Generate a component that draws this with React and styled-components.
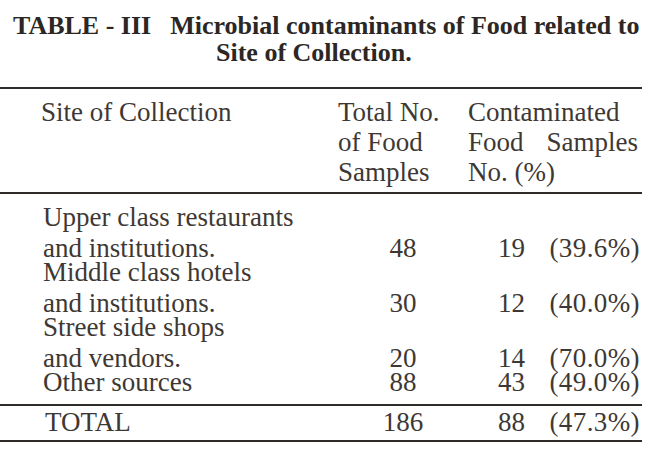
import React from "react";
import styled, { createGlobalStyle } from "styled-components";

const Global = createGlobalStyle`
  html, body { margin: 0; padding: 0; background: #ffffff; }
  body { font-family: "Liberation Serif", "Times New Roman", serif; color: #3e3834; }
`;

const Page = styled.div`
  width: 650px;
  height: 451px;
  overflow: hidden;
  background: #ffffff;
`;

const Caption = styled.div`
  padding-top: 12px;
  margin-bottom: 21px;
  font-family: "Liberation Serif", serif;
  font-weight: bold;
  font-size: 26px;
  line-height: 27px;
  color: #2c2724;
  white-space: nowrap;
`;

const CaptionLine = styled.div`
  padding-left: ${(p) => p.$left}px;
`;

const Label = styled.span`
  margin-right: 19px;
`;

const Table = styled.div`
  width: 642px;
  font-size: 27px;
  color: #3e3834;
`;

const Rule = styled.div`
  height: 2px;
  background: #302c29;
`;

const Section = styled.div`
  padding-top: ${(p) => p.$top}px;
  padding-bottom: ${(p) => p.$bottom}px;
`;

const Row = styled.div`
  display: grid;
  grid-template-columns: 338px 130px 174px;
  align-items: ${(p) => p.$align || "end"};
  line-height: ${(p) => p.$lh}px;
  white-space: nowrap;
`;

const LabelCell = styled.div`
  display: flex;
  flex-direction: column;
  gap: ${(p) => p.$gap || 0}px;
  padding-left: ${(p) => p.$indent}px;
`;

const CenterCell = styled.div`
  text-align: center;
`;

const LeftCell = styled.div`
  text-align: left;
`;

const JustifiedLine = styled.div`
  display: flex;
  justify-content: space-between;
  padding-right: 4px;
`;

const ContamCell = styled.div`
  display: grid;
  grid-template-columns: 57px 1fr;
`;

const Count = styled.span`
  text-align: right;
`;

const Percent = styled.span`
  text-align: right;
  padding-right: 2px;
  letter-spacing: 0.4px;
`;

const rows = [
  { lines: ["Upper class restaurants", "and institutions."], total: 48, count: 19, pct: "(39.6%)" },
  { lines: ["Middle class hotels", "and institutions."], total: 30, count: 12, pct: "(40.0%)" },
  { lines: ["Street side shops", "and vendors."], total: 20, count: 14, pct: "(70.0%)" },
  { lines: ["Other sources"], total: 88, count: 43, pct: "(49.0%)" },
];

export default function App() {
  return (
    <Page>
      <Global />
      <Caption>
        <CaptionLine $left={13}>
          <Label>TABLE - III</Label>Microbial contaminants of Food related to
        </CaptionLine>
        <CaptionLine $left={216}>Site of Collection.</CaptionLine>
      </Caption>
      <Table>
        <Rule />
        <Section $top={8} $bottom={5}>
          <Row $lh={30} $align="start">
            <LabelCell $indent={41}>
              <span>Site of Collection</span>
            </LabelCell>
            <LeftCell>
              <div>Total No.</div>
              <div>of Food</div>
              <div>Samples</div>
            </LeftCell>
            <LeftCell>
              <div>Contaminated</div>
              <JustifiedLine>
                <span>Food</span>
                <span>Samples</span>
              </JustifiedLine>
              <div>No. (%)</div>
            </LeftCell>
          </Row>
        </Section>
        <Rule />
        <Section $top={11} $bottom={10}>
          {rows.map((r) => (
            <Row key={r.lines[0]} $lh={24}>
              <LabelCell $indent={43} $gap={7}>
                {r.lines.map((l) => (
                  <span key={l}>{l}</span>
                ))}
              </LabelCell>
              <CenterCell>{r.total}</CenterCell>
              <ContamCell>
                <Count>{r.count}</Count>
                <Percent>{r.pct}</Percent>
              </ContamCell>
            </Row>
          ))}
        </Section>
        <Rule />
        <Section $top={4} $bottom={6}>
          <Row $lh={24}>
            <LabelCell $indent={45}>
              <span>TOTAL</span>
            </LabelCell>
            <CenterCell>186</CenterCell>
            <ContamCell>
              <Count>88</Count>
              <Percent>(47.3%)</Percent>
            </ContamCell>
          </Row>
        </Section>
        <Rule />
      </Table>
    </Page>
  );
}
